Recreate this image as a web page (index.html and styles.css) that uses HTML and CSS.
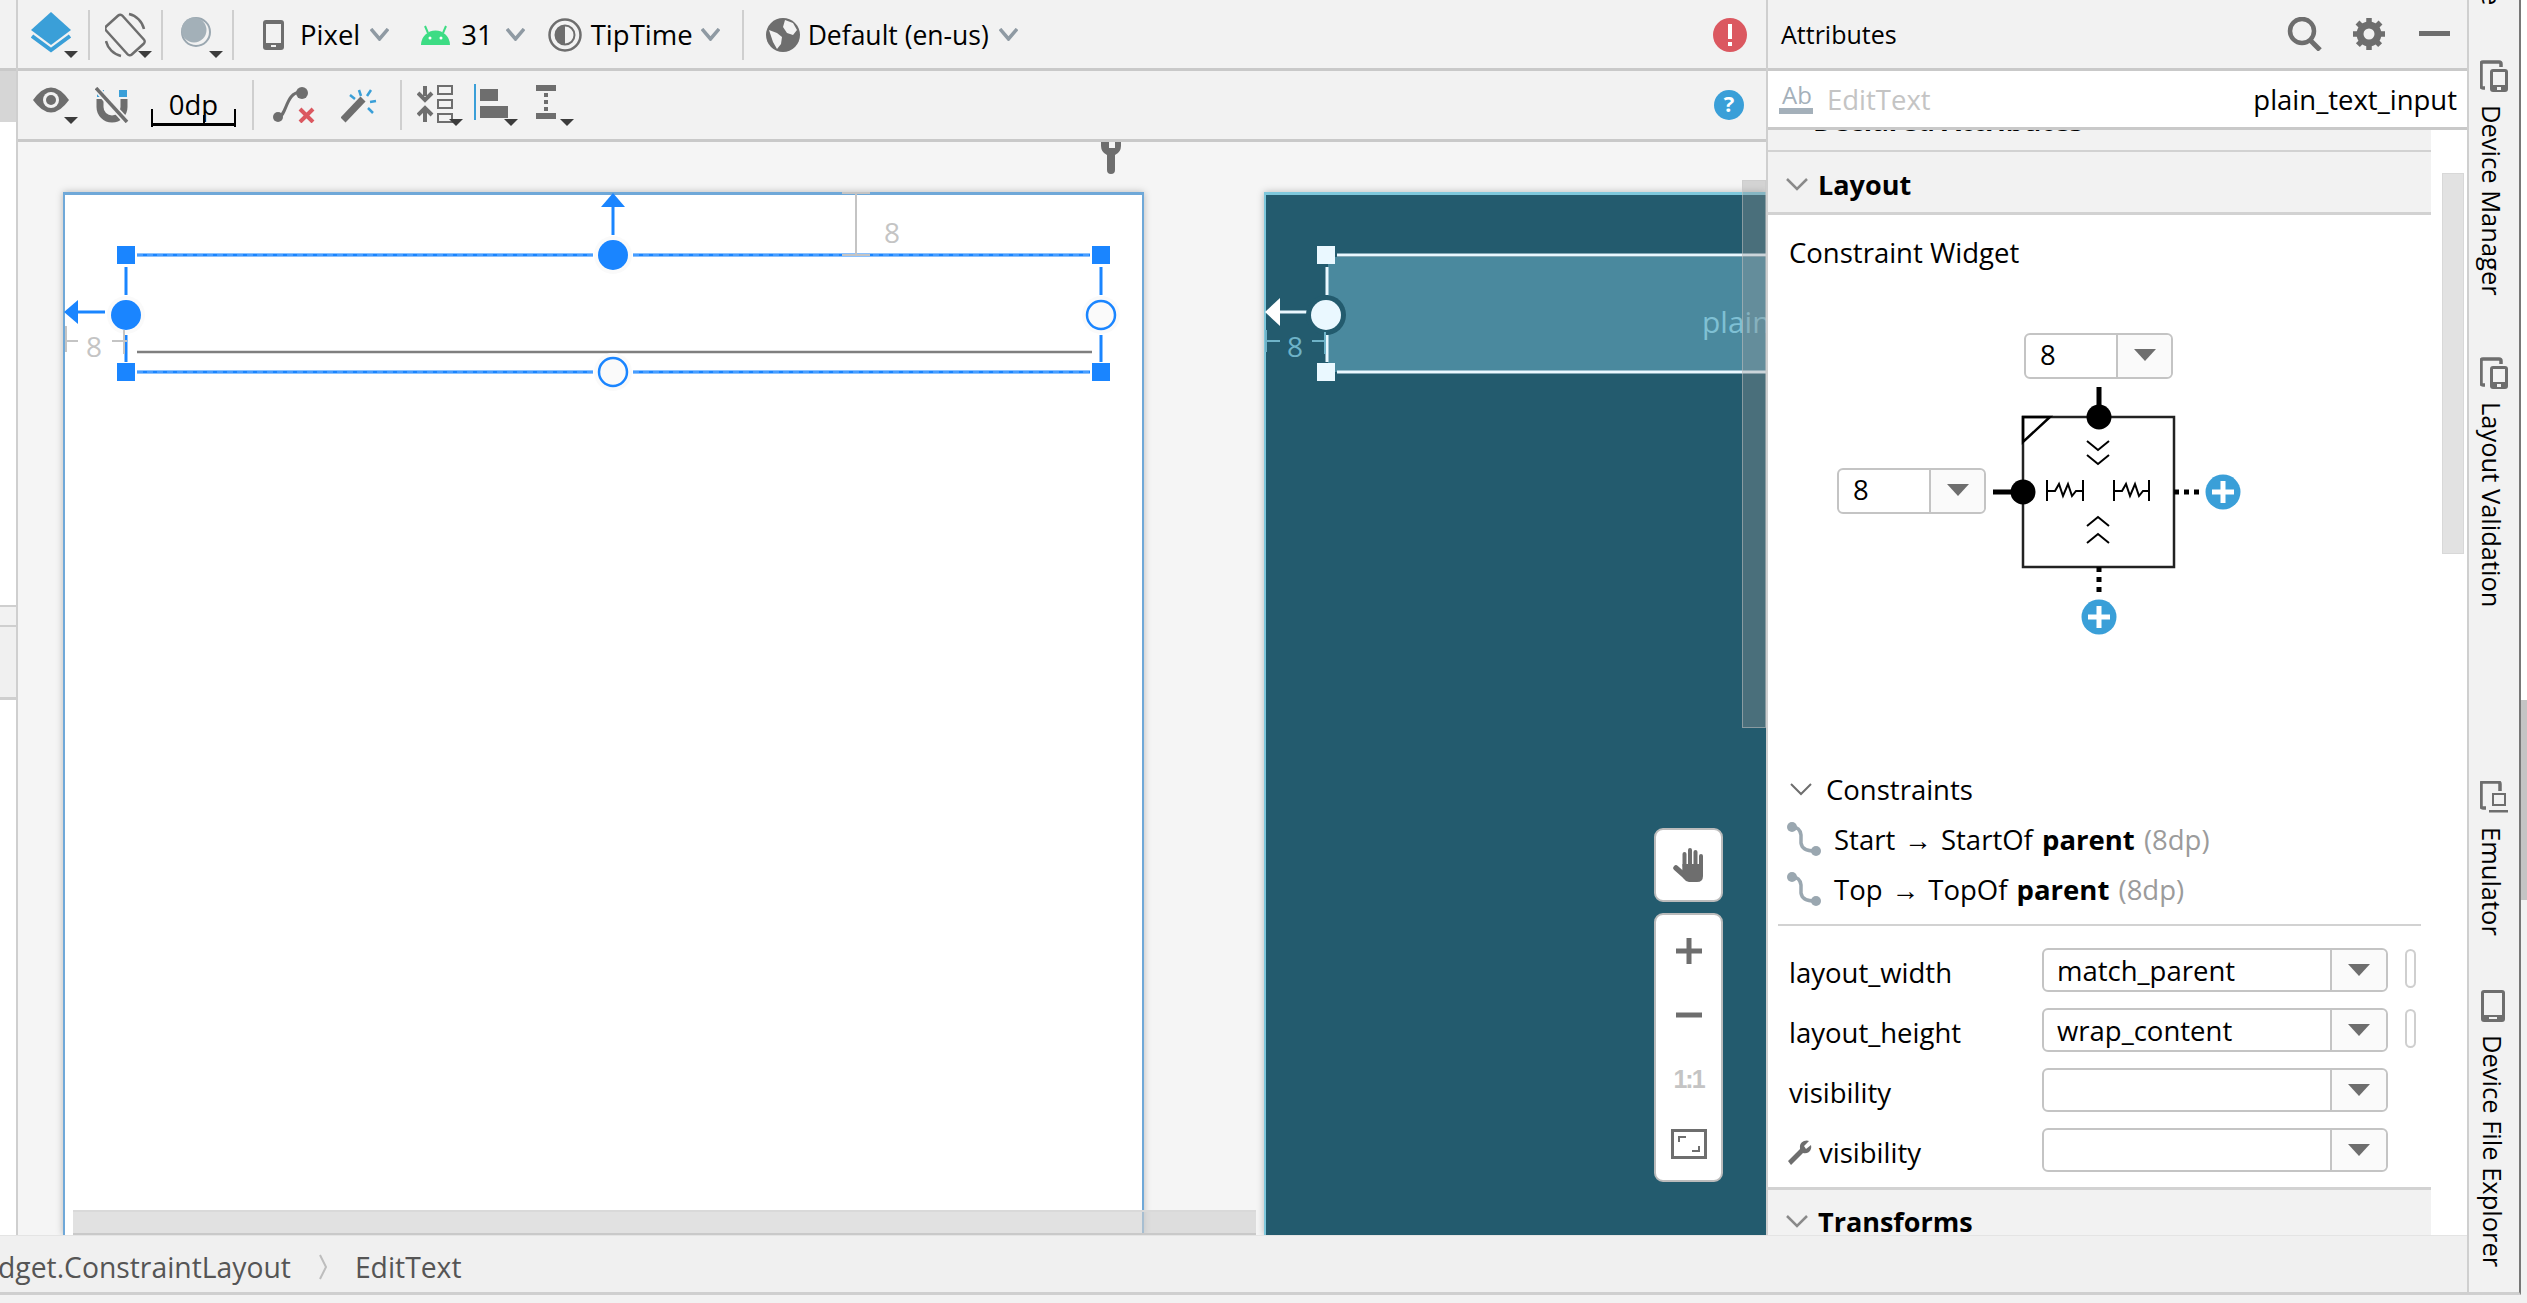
FILE: index.html
```html
<!DOCTYPE html>
<html lang="en">
<head>
  <meta charset="UTF-8" />
  <title>Layout Editor</title>
  <link rel="stylesheet" href="styles.css">
</head>
<body>
<div class="ide">
  <div class="column">
    <div class="work">
      <div class="strip">
        <div class="strip-top"></div>
        <div class="strip-a"></div>
        <div class="strip-b"></div>
      </div>

      <div class="editor">
        <!-- top toolbar -->
        <div class="bar bar-top">
          <svg class="m13" width="47" height="46" viewBox="0 0 47 46"><polygon points="20,0 40,18 20,33 0,18" fill="#3a9fd8"/><polyline points="1,24 20,38 39,24" fill="none" stroke="#3a9fd8" stroke-width="4"/><polygon points="33,39 47,39 40,46" fill="#3c3c3c"/></svg>
          <span class="sep m10"></span>
          <svg class="m15" width="47" height="46" viewBox="0 0 47 46"><rect x="9" y="4" width="22" height="38" rx="3" transform="rotate(-42 20 23)" fill="none" stroke="#6e6e6e" stroke-width="2.5"/><path d="M24 2a20 20 0 0 1 15 15M16 44A20 20 0 0 1 1 29" fill="none" stroke="#6e6e6e" stroke-width="2.5"/><polygon points="33,39 47,39 40,46" fill="#3c3c3c"/></svg>
          <span class="sep m9"></span>
          <svg class="m18" width="42" height="46" viewBox="0 0 42 46"><circle cx="15" cy="20" r="14" fill="#f2f2f2" stroke="#9aa7b0" stroke-width="2"/><circle cx="13" cy="18" r="12.500" fill="#a3b0b8"/><polygon points="28,39 42,39 35,46" fill="#3c3c3c"/></svg>
          <span class="sep m9"></span>
          <svg class="m29" width="21" height="30" viewBox="0 0 21 30"><rect width="21" height="30" rx="3" fill="#6e6e6e"/><rect x="3" y="4" width="15" height="19" fill="#f2f2f2"/><rect x="8" y="25" width="5" height="2" fill="#f2f2f2"/></svg>
          <span class="label m16">Pixel</span>
          <svg class="m10" width="19" height="13" viewBox="0 0 19 13"><polyline points="1,1 9.500,11 18,1" fill="none" stroke="#8f9aa3" stroke-width="3.500"/></svg>
          <svg class="m32" width="29" height="20" viewBox="0 0 29 20"><path d="M0 20a14.500 14.500 0 0 1 29 0z" fill="#3ddc84"/><path d="M7 8L4 1M22 8l3-7" stroke="#3ddc84" stroke-width="2"/><circle cx="9" cy="13" r="1.500" fill="#fff"/><circle cx="20" cy="13" r="1.500" fill="#fff"/></svg>
          <span class="label m11">31</span>
          <svg class="m13" width="19" height="13" viewBox="0 0 19 13"><polyline points="1,1 9.500,11 18,1" fill="none" stroke="#8f9aa3" stroke-width="3.500"/></svg>
          <svg class="m23" width="34" height="36" viewBox="0 0 34 36"><circle cx="17" cy="18" r="15.500" fill="none" stroke="#6e6e6e" stroke-width="2.500"/><circle cx="17" cy="18" r="9.500" fill="none" stroke="#6e6e6e" stroke-width="2"/><path d="M17 8.500a9.500 9.500 0 0 0 0 19z" fill="#6e6e6e"/></svg>
          <span class="label m9">TipTime</span>
          <svg class="m8" width="19" height="13" viewBox="0 0 19 13"><polyline points="1,1 9.500,11 18,1" fill="none" stroke="#8f9aa3" stroke-width="3.500"/></svg>
          <span class="sep m22"></span>
          <svg class="m22" width="34" height="36" viewBox="0 0 34 36"><circle cx="17" cy="18" r="17" fill="#6e6e6e"/><path d="M19 3l8 3 4 7-4 5-6-2-4-6zM3 13l8 3 5 4-1 7-4 5-4-7z" fill="#f2f2f2"/></svg>
          <span class="label label-config m8">Default (en-us)</span>
          <svg class="m10" width="19" height="13" viewBox="0 0 19 13"><polyline points="1,1 9.500,11 18,1" fill="none" stroke="#8f9aa3" stroke-width="3.500"/></svg>
          <svg class="push" width="34" height="36" viewBox="0 0 34 36"><circle cx="17" cy="18" r="17" fill="#db5860"/><rect x="15" y="7" width="4" height="15" fill="#fff"/><rect x="15" y="25" width="4" height="4" fill="#fff"/></svg>
        </div>

        <!-- second toolbar -->
        <div class="bar bar-second">
          <svg class="m15" width="45" height="37" viewBox="0 0 45 37"><path d="M0 13Q18-12 36 13 18 38 0 13z" fill="#6e6e6e"/><circle cx="18" cy="13" r="8" fill="#f2f2f2"/><circle cx="18" cy="13" r="5" fill="#6e6e6e"/><polygon points="31,30 45,30 38,37" fill="#3c3c3c"/></svg>
          <svg class="m17" width="35" height="36" viewBox="0 0 35 36"><rect x="2" y="3" width="7" height="7" fill="#3a9fd8"/><rect x="24" y="3" width="8" height="7" fill="#3a9fd8"/><path d="M5 12v8a12 12 0 0 0 24 0v-8" fill="none" stroke="#6e6e6e" stroke-width="7"/><path d="M1 1l31 34" stroke="#f2f2f2" stroke-width="7"/><path d="M1 1l31 34" stroke="#6e6e6e" stroke-width="3.500"/></svg>
          <div class="margin-ruler m21">0dp</div>
          <span class="sep m16"></span>
          <svg class="m19" width="42" height="36" viewBox="0 0 42 36"><path d="M5 30C14 30 12 5 28 5" fill="none" stroke="#6e6e6e" stroke-width="3"/><circle cx="5" cy="30" r="5" fill="#6e6e6e"/><circle cx="29" cy="6" r="6" fill="#6e6e6e"/><path d="M27 22l13 13M40 22L27 35" stroke="#db5860" stroke-width="4"/></svg>
          <svg class="m26" width="36" height="36" viewBox="0 0 36 36"><path d="M2 33L22 12" stroke="#6e6e6e" stroke-width="7"/><path d="M18 3l2 6M30 3l-4 6M35 14l-6 1M32 26l-5-5M9 8l5 4" stroke="#3a9fd8" stroke-width="2.500"/></svg>
          <span class="sep m23"></span>
          <svg class="m15" width="46" height="42" viewBox="0 0 46 42"><path d="M8 2v10M1 9l7 7 7-7M8 38V27M1 31l7-7 7 7" fill="none" stroke="#6e6e6e" stroke-width="4"/><rect x="21" y="2" width="14" height="8" fill="none" stroke="#6e6e6e" stroke-width="2"/><rect x="21" y="16" width="14" height="8" fill="none" stroke="#6e6e6e" stroke-width="2"/><rect x="21" y="30" width="14" height="8" fill="none" stroke="#6e6e6e" stroke-width="2"/><polygon points="32,35 46,35 39,42" fill="#3c3c3c"/></svg>
          <svg class="m11" width="44" height="42" viewBox="0 0 44 42"><rect y="0" width="2" height="36" fill="#3a9fd8"/><rect x="6" y="5" width="18" height="12" fill="#6e6e6e"/><rect x="6" y="22" width="28" height="12" fill="#6e6e6e"/><polygon points="30,35 44,35 37,42" fill="#3c3c3c"/></svg>
          <svg class="m18" width="38" height="42" viewBox="0 0 38 42"><rect x="0" y="1" width="20" height="6" fill="#6e6e6e"/><rect x="0" y="29" width="20" height="6" fill="#6e6e6e"/><path d="M10 9v18" stroke="#6e6e6e" stroke-width="4" stroke-dasharray="4 3"/><polygon points="24,35 38,35 31,42" fill="#3c3c3c"/></svg>
          <svg class="push" width="30" height="30" viewBox="0 0 30 30"><circle cx="15" cy="15" r="15" fill="#3a9fd8"/><text x="15" y="22" text-anchor="middle" class="help-mark">?</text></svg>
        </div>

        <!-- design surface -->
        <div class="surface">
          <div class="device device-design"></div>
          <div class="device device-blueprint"></div>

          <svg class="overlay" width="1748" height="1093" viewBox="18 142 1748 1093">
            <!-- blueprint widget -->
            <rect x="1328" y="257" width="438" height="115" fill="#4a899e"/>
            <text x="1702" y="333" class="plain-hint">plain</text>

            <!-- wrench marker -->
            <path d="M1101 142v4a10 10 0 0 0 6 9v15a4 4 0 0 0 8 0v-15a10 10 0 0 0 6-9v-4h-6v6h-6v-6z" fill="#6e6e6e"/>

            <!-- design selection -->
            <g stroke="#1a85ff" stroke-width="3" fill="none">
              <path d="M137 255H593M633 255H1090M137 372H593M633 372H1090"/>
              <path d="M126 267V295M126 335V362M1101 267V295M1101 335V362"/>
              <path d="M613 235V205M105 312H76"/>
            </g>
            <path d="M137 255H593M633 255H1090M137 372H593M633 372H1090" stroke="#fff" stroke-opacity="0.4" stroke-dasharray="6 4" fill="none"/>
            <path d="M137 352H1092" stroke="#7f7f7f" stroke-width="2.500"/>
            <g fill="#1a85ff">
              <polygon points="613,193 601,207 625,207"/>
              <polygon points="64,312 78,300 78,324"/>
              <rect x="117" y="246" width="18" height="18"/>
              <rect x="117" y="363" width="18" height="18"/>
              <rect x="1092" y="246" width="18" height="18"/>
              <rect x="1092" y="363" width="18" height="18"/>
            </g>
            <circle cx="126" cy="315" r="19" fill="#fafafa"/>
            <circle cx="126" cy="315" r="15" fill="#1a85ff"/>
            <circle cx="613" cy="255" r="19" fill="#fafafa"/>
            <circle cx="613" cy="255" r="15" fill="#1a85ff"/>
            <circle cx="613" cy="372" r="19" fill="#fafafa"/>
            <circle cx="613" cy="372" r="14" fill="#fafafa" stroke="#1a85ff" stroke-width="2.500"/>
            <circle cx="1101" cy="315" r="19" fill="#fafafa"/>
            <circle cx="1101" cy="315" r="14" fill="#fafafa" stroke="#1a85ff" stroke-width="2.500"/>

            <!-- design margins -->
            <g stroke="#c4c4c4" stroke-width="2" fill="none">
              <path d="M856 193V255M842 193H870M842 255H870"/>
              <path d="M66 326V352M66 341H78M112 341H127M124 330V354"/>
            </g>
            <text x="884" y="243" class="spec spec-design">8</text>
            <text x="86" y="357" class="spec spec-design">8</text>

            <!-- blueprint selection -->
            <g stroke="#eaf8ff" stroke-width="3" fill="none">
              <path d="M1337 255H1766M1337 372H1766M1327 267V295M1327 335V362M1310 312H1280"/>
            </g>
            <g fill="#eaf8ff">
              <polygon points="1265,312 1280,298 1280,326" fill="#fff"/>
              <rect x="1317" y="246" width="18" height="18"/>
              <rect x="1317" y="363" width="18" height="18"/>
            </g>
            <circle cx="1326" cy="315" r="20" fill="#235b6e"/>
            <circle cx="1326" cy="315" r="15" fill="#eaf8ff"/>
            <path d="M1266 330V352M1266 341H1280M1312 341H1326M1325 332V354" stroke="#6fb3c8" stroke-width="2" fill="none"/>
            <text x="1287" y="357" class="spec spec-blue">8</text>
          </svg>

          <div class="scroll-v"></div>
          <div class="scroll-h"></div>

          <div class="zoom-tools">
            <div class="zoom-group">
              <div class="zoom-btn zoom-hand">
                <svg width="32" height="36" viewBox="0 0 32 36"><path d="M3 21l9 8" stroke="#6e6e6e" stroke-width="5.500" stroke-linecap="round"/><path d="M11.500 7v12M17 3v14M22.500 5v12M28 9v10" stroke="#6e6e6e" stroke-width="4" stroke-linecap="round"/><path d="M9.500 17H30v12q0 6-6 6H16q-3 0-5-3l-2-3z" fill="#6e6e6e"/></svg>
              </div>
            </div>
            <div class="zoom-group zoom-stack">
              <div class="zoom-btn"><svg width="26" height="26" viewBox="0 0 26 26"><path d="M0 13H26M13 0V26" stroke="#6e6e6e" stroke-width="5"/></svg></div>
              <div class="zoom-btn"><svg width="26" height="6" viewBox="0 0 26 6"><path d="M0 3H26" stroke="#6e6e6e" stroke-width="5"/></svg></div>
              <div class="zoom-btn one-to-one">1:1</div>
              <div class="zoom-btn"><svg width="36" height="30" viewBox="0 0 36 30"><rect x="1.500" y="1.500" width="33" height="27" fill="none" stroke="#6e6e6e" stroke-width="3"/><path d="M8 13V8h7M28 17v5h-7" fill="none" stroke="#6e6e6e" stroke-width="2"/></svg></div>
            </div>
          </div>
        </div>
      </div>

      <!-- attributes panel -->
      <div class="attrs">
        <div class="attrs-head">
          <span class="attrs-title">Attributes</span>
          <svg class="m-auto" width="36" height="34" viewBox="0 0 36 34"><circle cx="15" cy="14" r="12" fill="none" stroke="#6e6e6e" stroke-width="4.500"/><path d="M23 23l10 10" stroke="#6e6e6e" stroke-width="5"/></svg>
          <svg class="m30" width="32" height="32" viewBox="0 0 32 32"><circle cx="16" cy="16" r="9" fill="none" stroke="#6e6e6e" stroke-width="7"/><path d="M16 0v32M0 16h32M4.500 4.500l23 23M27.500 4.500l-23 23" stroke="#6e6e6e" stroke-width="5.500" stroke-dasharray="6 20 6 20"/></svg>
          <svg class="m34" width="31" height="6" viewBox="0 0 31 6"><rect width="31" height="5" fill="#6e6e6e"/></svg>
        </div>
        <div class="attrs-sub">
          <svg width="34" height="30" viewBox="0 0 34 30"><text x="3" y="20" class="ab-mark">Ab</text><rect y="24" width="34" height="6" fill="#a4b0ba"/></svg>
          <span class="widget-type">EditText</span>
          <span class="widget-id">plain_text_input</span>
        </div>

        <div class="attrs-body">
          <div class="section section-clipped"><span class="section-name">Declared Attributes</span></div>
          <div class="section section-layout">
            <svg width="22" height="13" viewBox="0 0 22 13"><polyline points="1,1 11,11 21,1" fill="none" stroke="#8a8a8a" stroke-width="2.500"/></svg>
            <span class="section-name">Layout</span>
          </div>

          <div class="cw-title">Constraint Widget</div>
          <div class="diagram">
            <div class="combo combo-small combo-top"><span class="combo-val">8</span><span class="combo-arrow"></span></div>
            <div class="combo combo-small combo-left"><span class="combo-val">8</span><span class="combo-arrow"></span></div>
            <svg class="diagram-art" width="360" height="360" viewBox="1960 340 360 360">
              <rect x="2023" y="417" width="151" height="150" fill="none" stroke="#222" stroke-width="2.500"/>
              <path d="M2023 417H2050L2023 442z" fill="none" stroke="#000" stroke-width="2.500"/>
              <path d="M2099 387V417M1993 492H2023" stroke="#000" stroke-width="5"/>
              <circle cx="2099" cy="417" r="12.500"/>
              <circle cx="2023" cy="492" r="12.500"/>
              <path d="M2174 492H2199M2099 567V592" stroke="#000" stroke-width="5" stroke-dasharray="5 5"/>
              <g fill="none" stroke="#000" stroke-width="2">
                <path d="M2087 441l11 9 11-9M2087 455l11 9 11-9M2087 526l11-9 11 9M2087 543l11-9 11 9"/>
                <path d="M2047 480v21M2083 480v21M2047 491h8l4-7 4 12 5-12 4 12 4-5h7"/>
                <path d="M2114 480v21M2149 480v21M2114 491h8l4-7 4 12 5-12 4 12 4-5h6"/>
              </g>
              <circle cx="2223" cy="492" r="17.500" fill="#3a9fd8"/>
              <path d="M2212 492H2234M2223 481V503" stroke="#fff" stroke-width="5"/>
              <circle cx="2099" cy="617" r="17.500" fill="#3a9fd8"/>
              <path d="M2088 617H2110M2099 606V628" stroke="#fff" stroke-width="5"/>
            </svg>
          </div>

          <div class="subhead">
            <svg width="22" height="13" viewBox="0 0 22 13"><polyline points="1,1 11,11 21,1" fill="none" stroke="#6e6e6e" stroke-width="2"/></svg>
            <span>Constraints</span>
          </div>
          <div class="constraint constraint-first">
            <svg width="35" height="35" viewBox="0 0 35 35"><path d="M5 5q8 0 9 8v8q1 8 14 8" fill="none" stroke="#9aa7b0" stroke-width="3.500"/><circle cx="5" cy="5" r="5" fill="#9aa7b0"/><circle cx="29" cy="29" r="5" fill="#9aa7b0"/></svg>
            <span>Start → StartOf <b>parent</b> <em>(8dp)</em></span>
          </div>
          <div class="constraint">
            <svg width="35" height="35" viewBox="0 0 35 35"><path d="M5 5q8 0 9 8v8q1 8 14 8" fill="none" stroke="#9aa7b0" stroke-width="3.500"/><circle cx="5" cy="5" r="5" fill="#9aa7b0"/><circle cx="29" cy="29" r="5" fill="#9aa7b0"/></svg>
            <span>Top → TopOf <b>parent</b> <em>(8dp)</em></span>
          </div>

          <div class="attr-rows">
            <div class="attr-row">
              <span class="attr-name">layout_width</span>
              <div class="combo combo-wide"><span class="combo-val">match_parent</span><span class="combo-arrow"></span></div>
              <span class="pill"></span>
            </div>
            <div class="attr-row">
              <span class="attr-name">layout_height</span>
              <div class="combo combo-wide"><span class="combo-val">wrap_content</span><span class="combo-arrow"></span></div>
              <span class="pill"></span>
            </div>
            <div class="attr-row">
              <span class="attr-name">visibility</span>
              <div class="combo combo-wide"><span class="combo-val"></span><span class="combo-arrow"></span></div>
            </div>
            <div class="attr-row">
              <span class="attr-name attr-tools">
                <svg width="25" height="25" viewBox="0 0 25 25"><path d="M1 21L13 9q-1-6 4-8 3-1 5 0l-5 5 2 3 5-4q1 4-2 7-3 2-6 1L4 25z" fill="#6e6e6e"/></svg>
                visibility
              </span>
              <div class="combo combo-wide"><span class="combo-val"></span><span class="combo-arrow"></span></div>
            </div>
          </div>

          <div class="section section-transforms">
            <svg width="22" height="13" viewBox="0 0 22 13"><polyline points="1,1 11,11 21,1" fill="none" stroke="#8a8a8a" stroke-width="2.500"/></svg>
            <span class="section-name">Transforms</span>
          </div>

          <div class="scroll-attrs"></div>
        </div>
      </div>
    </div>

    <div class="status">
      <span class="crumb">dget.ConstraintLayout</span>
      <svg class="crumb-sep" width="8" height="26" viewBox="0 0 8 26"><polyline points="1,1 7,13 1,25" fill="none" stroke="#bdbdbd" stroke-width="2"/></svg>
      <span class="crumb">EditText</span>
    </div>
  </div>

  <!-- right tool strip -->
  <div class="tabs">
    <div class="tab tab-cut"><span>e</span></div>
    <div class="tab tab-device">
      <svg width="28" height="32" viewBox="0 0 28 32"><path d="M5 28H3a2 2 0 0 1-2-2V4a2 2 0 0 1 2-2h16a2 2 0 0 1 2 2v3" fill="none" stroke="#6e6e6e" stroke-width="3.500"/><rect x="10" y="9" width="18" height="23" rx="3" fill="#6e6e6e"/><rect x="13" y="12" width="12" height="13" fill="#f2f2f2"/><rect x="17" y="27" width="4" height="3" fill="#f2f2f2"/></svg>
      <span>Device Manager</span>
    </div>
    <div class="tab tab-validation">
      <svg width="28" height="32" viewBox="0 0 28 32"><path d="M5 28H3a2 2 0 0 1-2-2V4a2 2 0 0 1 2-2h16a2 2 0 0 1 2 2v3" fill="none" stroke="#6e6e6e" stroke-width="3.500"/><rect x="10" y="9" width="18" height="23" rx="3" fill="#6e6e6e"/><rect x="13" y="12" width="12" height="13" fill="#f2f2f2"/><rect x="17" y="27" width="4" height="3" fill="#f2f2f2"/></svg>
      <span>Layout Validation</span>
    </div>
    <div class="tab tab-emulator">
      <svg width="28" height="33" viewBox="0 0 28 33"><path d="M6 27H3a2 2 0 0 1-2-2V3a2 2 0 0 1 2-2h15a2 2 0 0 1 2 2v7" fill="none" stroke="#6e6e6e" stroke-width="3.500"/><rect x="13" y="13" width="12" height="11" fill="none" stroke="#6e6e6e" stroke-width="2"/><rect x="9" y="29" width="19" height="2.500" fill="#6e6e6e"/></svg>
      <span>Emulator</span>
    </div>
    <div class="tab tab-files">
      <svg width="24" height="32" viewBox="0 0 24 32"><rect width="24" height="32" rx="3" fill="#6e6e6e"/><rect x="3" y="3" width="18" height="22" fill="#f2f2f2"/><rect x="8" y="27" width="8" height="2" fill="#f2f2f2"/></svg>
      <span>Device File Explorer</span>
    </div>
  </div>
</div>
</body>
</html>
```

FILE: styles.css
```css
* {
  box-sizing: border-box;
}
html, body {
  margin: 0;
  padding: 0;
  overflow: hidden;
  background: #f2f2f2;
}
body {
  font-family: "Open Sans", "Noto Sans", sans-serif;
  font-size: 27.5px;
  color: #000;
}
svg {
  display: block;
  flex: none;
}
.ide {
  display: flex;
  width: 2527px;
  height: 1303px;
  background: linear-gradient(#fff 0 700px, #c4c4c4 700px 900px, #f2f2f2 900px);
}
.column {
  width: 2467px;
  flex: none;
  display: flex;
  flex-direction: column;
  background: #f2f2f2;
}
.work {
  display: flex;
  height: 1235px;
}

/* left strip */
.strip {
  width: 18px;
  border-right: 2px solid #cfcfcf;
  background: #f2f2f2;
}
.strip-top {
  height: 71px;
  border-bottom: 3px solid #c9c9c9;
}
.strip-a {
  height: 51px;
  background: #d6d6d6;
}
.strip-b {
  height: 1113px;
  background: linear-gradient(#fff 0 483px, #cfcfcf 483px 485px, #f2f2f2 485px 503px, #cfcfcf 503px 505px, #f0f0f0 505px 575px, #cfcfcf 575px 578px, #fff 578px);
}

/* toolbars */
.editor {
  width: 1748px;
  display: flex;
  flex-direction: column;
}
.bar {
  display: flex;
  align-items: center;
  height: 71px;
  background: #f2f2f2;
  border-bottom: 3px solid #c9c9c9;
  padding-right: 19px;
}
.bar-top {
  padding-top: 1px;
}
.bar-second {
  padding-right: 22px;
}
.sep {
  width: 2px;
  height: 50px;
  background: #cfcfcf;
  flex: none;
}
.label {
  white-space: nowrap;
}
.label-config {
  font-size: 26.5px;
}
.push { margin-left: auto; }
.m8 { margin-left: 8px; }
.m9 { margin-left: 9px; }
.m10 { margin-left: 10px; }
.m11 { margin-left: 11px; }
.m13 { margin-left: 13px; }
.m15 { margin-left: 15px; }
.m16 { margin-left: 16px; }
.m17 { margin-left: 17px; }
.m18 { margin-left: 18px; }
.m19 { margin-left: 19px; }
.m21 { margin-left: 21px; }
.m22 { margin-left: 22px; }
.m23 { margin-left: 23px; }
.m26 { margin-left: 26px; }
.m29 { margin-left: 29px; }
.m30 { margin-left: 30px; }
.m32 { margin-left: 32px; }
.m34 { margin-left: 34px; }
.m-auto { margin-left: auto; }

.margin-ruler {
  position: relative;
  width: 85px;
  height: 38px;
  margin-top: 3px;
  text-align: center;
  line-height: 33px;
  border-bottom: 3px solid #000;
  background: linear-gradient(#000, #000) 52px 100% / 2px 8px no-repeat;
}
.margin-ruler::before,
.margin-ruler::after {
  content: "";
  position: absolute;
  bottom: -4px;
  width: 2px;
  height: 18px;
  background: #000;
}
.margin-ruler::before { left: 0; }
.margin-ruler::after { right: 0; }
.help-mark {
  font: bold 22px "Open Sans", sans-serif;
  fill: #fff;
}

/* design surface */
.surface {
  position: relative;
  flex: 1;
  background: #f5f5f5;
  overflow: hidden;
}
.device {
  position: absolute;
  top: 50px;
  bottom: 0;
  box-shadow: 0 0 7px rgba(0, 0, 0, 0.25);
}
.device-design {
  left: 45px;
  width: 1081px;
  background: #fff;
  border: 3px solid #6fa8d8;
  border-width: 3px 2px 0;
}
.device-blueprint {
  left: 1246px;
  right: 0;
  background: #235b6e;
  border-top: 3px solid #7ec8dc;
  border-left: 2px solid #7ec8dc;
}
.overlay {
  position: absolute;
  left: 0;
  top: 0;
}
.plain-hint {
  font: 30px "Open Sans", sans-serif;
  fill: #7fc0d4;
}
.spec {
  font: 28px "Open Sans", sans-serif;
}
.spec-design { fill: #c4c4c4; }
.spec-blue { fill: #6fb3c8; }
.scroll-v {
  position: absolute;
  left: 1724px;
  top: 38px;
  width: 24px;
  height: 548px;
  background: rgba(150, 150, 150, 0.35);
  border: 1px solid rgba(200, 200, 200, 0.5);
}
.scroll-h {
  position: absolute;
  left: 55px;
  bottom: 0;
  width: 1183px;
  height: 25px;
  background: rgba(205, 205, 205, 0.6);
  border-top: 2px solid #d9d9d9;
  border-bottom: 2px solid #c9c9c9;
}
.zoom-tools {
  position: absolute;
  left: 1636px;
  top: 686px;
  width: 69px;
  display: flex;
  flex-direction: column;
  gap: 11px;
}
.zoom-group {
  background: #fff;
  border: 2px solid #bbb;
  border-radius: 9px;
}
.zoom-stack {
  display: flex;
  flex-direction: column;
  padding: 4px 0;
  height: 269px;
}
.zoom-btn {
  display: flex;
  align-items: center;
  justify-content: center;
  height: 65px;
}
.zoom-hand {
  height: 70px;
}
.one-to-one {
  font: bold 25px "Liberation Sans", sans-serif;
  letter-spacing: -2px;
  color: #c4c4c4;
}

/* attributes */
.attrs {
  width: 701px;
  border-left: 2px solid #cfcfcf;
  display: flex;
  flex-direction: column;
  background: #fff;
}
.attrs-head {
  height: 71px;
  padding: 0 17px 0 13px;
  display: flex;
  align-items: center;
  background: #f2f2f2;
  border-bottom: 3px solid #c9c9c9;
}
.attrs-title {
  font-size: 25px;
}
.attrs-sub {
  height: 59px;
  display: flex;
  align-items: center;
  padding: 0 10px 0 11px;
  background: #fff;
  border-bottom: 3px solid #c9c9c9;
}
.widget-type {
  margin-left: 14px;
  color: #c4c4c4;
}
.widget-id {
  margin-left: auto;
}
.ab-mark {
  font: 24px "Open Sans", sans-serif;
  fill: #a4b0ba;
}
.attrs-body {
  position: relative;
  flex: 1;
  overflow: hidden;
}
.section {
  width: 663px;
  background: #f2f2f2;
  display: flex;
  align-items: center;
}
.section-name {
  font-weight: 700;
  font-size: 27px;
}
.section-clipped {
  height: 22px;
  overflow: hidden;
  border-bottom: 2px solid #d2d2d2;
  padding-left: 45px;
  align-items: flex-start;
}
.section-clipped .section-name {
  margin-top: -28px;
  font-size: 27.5px;
}
.section-layout {
  height: 63px;
  border-bottom: 3px solid #d2d2d2;
  padding: 5px 0 0 18px;
  gap: 10px;
}
.cw-title {
  height: 77px;
  line-height: 76px;
  padding-left: 21px;
}
.diagram {
  position: relative;
  height: 478px;
}
.diagram-art {
  position: absolute;
  left: 192px;
  top: 48px;
}
.combo {
  display: flex;
  height: 44px;
  background: #fff;
  border: 2px solid #c4c4c4;
  border-radius: 6px;
}
.combo-small {
  position: absolute;
  width: 149px;
  height: 46px;
}
.combo-top {
  left: 256px;
  top: 41px;
}
.combo-left {
  left: 69px;
  top: 176px;
}
.combo-val {
  flex: 1;
  padding-left: 13px;
  line-height: 42px;
  white-space: nowrap;
}
.combo-arrow {
  position: relative;
  width: 56px;
  border-left: 2px solid #c4c4c4;
  background: #fafafa;
  border-radius: 0 5px 5px 0;
}
.combo-arrow::after {
  content: "";
  position: absolute;
  left: 16px;
  top: 14px;
  border-style: solid;
  border-width: 12px 11px 0;
  border-color: #6e6e6e transparent transparent;
}
.combo-small .combo-val {
  padding-left: 14px;
  line-height: 40px;
}
.combo-small .combo-arrow {
  width: 55px;
}
.subhead {
  height: 38px;
  display: flex;
  align-items: center;
  gap: 14px;
  padding-left: 22px;
}
.constraint {
  height: 50px;
  display: flex;
  align-items: center;
  gap: 12px;
  padding-left: 19px;
  word-spacing: 2px;
}
.constraint-first {
  margin-top: 6px;
}
.constraint em {
  font-style: normal;
  color: #9b9b9b;
}
.constraint b {
  font-weight: 700;
}
.attr-rows {
  margin: 10px 0 0 10px;
  width: 643px;
  border-top: 2px solid #d2d2d2;
  padding-top: 22px;
}
.attr-row {
  height: 60px;
  display: flex;
  align-items: flex-start;
}
.attr-name {
  width: 264px;
  padding-left: 11px;
  height: 48px;
  display: flex;
  align-items: center;
  gap: 7px;
}
.attr-tools {
  padding-left: 9px;
}
.combo-wide {
  width: 346px;
  flex: none;
}
.pill {
  width: 11px;
  height: 39px;
  margin: 1px 0 0 17px;
  border: 2px solid #cfcfcf;
  border-radius: 6px;
}
.section-transforms {
  margin-top: -1px;
  height: 66px;
  padding-left: 18px;
  gap: 10px;
  border-top: 3px solid #d2d2d2;
}
.scroll-attrs {
  position: absolute;
  left: 674px;
  top: 43px;
  width: 22px;
  height: 381px;
  background: #e2e2e2;
  border: 1px solid #d8d8d8;
}

/* status bar */
.status {
  height: 60px;
  display: flex;
  align-items: center;
  gap: 28px;
  padding-top: 6px;
  margin-left: -2px;
  background: #f0f0f0;
  border-top: 1px solid #e4e4e4;
  border-bottom: 3px solid #cfcfcf;
}
.crumb {
  color: #555;
  font-size: 28.3px;
}

/* right tool strip */
.tabs {
  width: 54px;
  position: relative;
  height: 1295px;
  background: #f2f2f2;
  border-left: 2px solid #cfcfcf;
  border-right: 2px solid #777;
  border-bottom: 3px solid #cfcfcf;
  flex: none;
}
.tab {
  position: absolute;
  left: 11px;
  display: flex;
  flex-direction: column;
  align-items: flex-start;
  gap: 13px;
}
.tab span {
  writing-mode: vertical-rl;
  font-size: 25.5px;
  line-height: 28px;
  margin-left: -2px;
  white-space: nowrap;
}
.tab-cut { top: -9px; }
.tab-device { top: 60px; }
.tab-validation { top: 357px; }
.tab-emulator { top: 781px; }
.tab-files { top: 990px; left: 12px; }
```
